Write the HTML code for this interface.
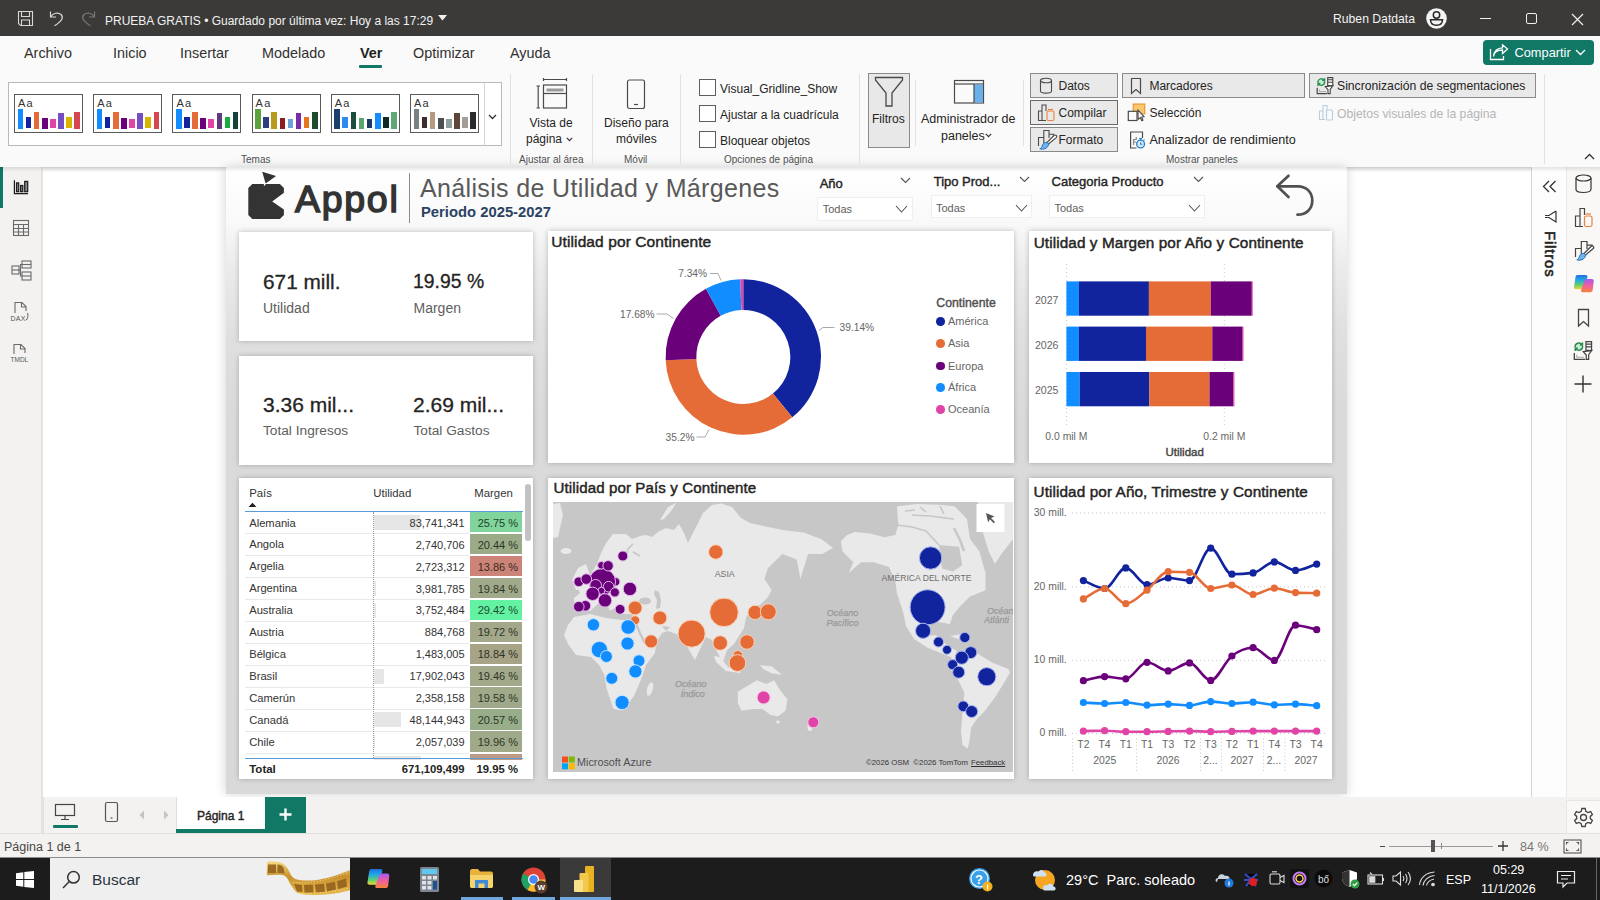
<!DOCTYPE html>
<html><head><meta charset="utf-8">
<style>
*{box-sizing:border-box;margin:0;padding:0}
html,body{width:1600px;height:900px;overflow:hidden;background:#fff;font-family:"Liberation Sans",sans-serif;color:#252423;position:relative}
.a{position:absolute}
.t{line-height:1;white-space:nowrap}
#title{left:0;top:0;width:1600px;height:36px;background:#3b3a39}
#tabs{left:0;top:36px;width:1600px;height:34px;background:#fafafa}
#ribbon{left:0;top:70px;width:1600px;height:97px;background:#fafafa;box-shadow:0 1.5px 4px rgba(0,0,0,.13)}
.tab{top:9.8px;font-size:14.4px;color:#323130;line-height:1;white-space:nowrap}
.lbl{font-size:10px;color:#505050}
.rb{font-size:12px;color:#252423}
.cb{width:17px;height:17px;border:1px solid #5e5e5e;background:#fff}
.tg{border:1px solid #8a8a8a;background:#e9e9e9}
#leftnav{left:0;top:167px;width:43px;height:666px;background:#f3f2f1;border-right:2px solid #e4e3e2}
#page{left:226px;top:167px;width:1121px;height:627px;background:linear-gradient(to bottom,#fff 0px,#f9f9f9 55px,#ebebeb 100px,#dfdfdf 170px,#dadada 250px,#d9d9d9 100%);box-shadow:-3px 0 10px rgba(0,0,0,.10),3px 0 10px rgba(0,0,0,.08)}
#filters{left:1531px;top:167px;width:35px;height:630px;background:#fdfdfd;border-left:1.5px solid #d4d4d4}
#rightbar{left:1566px;top:167px;width:34px;height:633px;background:#f9f8f7;border-left:1px solid #e9e9e9}
#pagetabs{left:43px;top:797px;width:1557px;height:36px;background:#f3f2f1}
#status{left:0;top:833px;width:1600px;height:24px;background:#f3f2f1;border-top:1px solid #e1e1e1}
#taskbar{left:0;top:857px;width:1600px;height:43px;background:#1c1c1c}
.card{position:absolute;background:#fff;box-shadow:0 0 5px rgba(0,0,0,.24)}
.sl{font-size:13px;color:#252423;-webkit-text-stroke:0.4px #252423}
.st{font-size:11px;color:#605e5c}
.chev path{fill:none;stroke:#555;stroke-width:1.1}
.slbox{border:1px solid #efefef;background:#fff}
.kv{font-size:20px;color:#252423;-webkit-text-stroke:0.3px #252423}
.ct{font-weight:normal;color:#252423;-webkit-text-stroke:0.45px #252423;letter-spacing:0.1px}
.sb{-webkit-text-stroke:0.4px currentColor}
.kl{font-size:14px;color:#605e5c}
</style></head>
<body>
<div id="ribbon" class="a"></div>
<div id="leftnav" class="a"></div>
<div id="page" class="a"></div>
<div id="filters" class="a"></div>
<div id="rightbar" class="a"></div>
<div id="pagetabs" class="a"></div>
<div id="status" class="a"></div>
<div id="taskbar" class="a"></div>
<!-- TITLE BAR -->
<div id="title" class="a">
  <svg class="a" style="left:17px;top:10px" width="17" height="17" viewBox="0 0 17 17" fill="none" stroke="#d8d8d8" stroke-width="1.1">
    <path d="M1.5 1.5 H15.5 V15.5 H3.5 L1.5 13.5 Z"/><path d="M4.5 1.5 V6.5 H12.5 V1.5"/><path d="M4.5 15.5 V10 H12.5 V15.5"/>
  </svg>
  <svg class="a" style="left:49px;top:10px" width="16" height="17" viewBox="0 0 16 17" fill="none" stroke="#d8d8d8" stroke-width="1.2">
    <path d="M1.5 1.5 V7 H7"/><path d="M1.8 6.8 C4 3 9 2 12 4.5 C15 7.5 13 11 5.5 15.8"/>
  </svg>
  <svg class="a" style="left:80px;top:10px" width="16" height="17" viewBox="0 0 16 17" fill="none" stroke="#7a7978" stroke-width="1.2">
    <path d="M14.5 1.5 V7 H9"/><path d="M14.2 6.8 C12 3 7 2 4 4.5 C1 7.5 3 11 10.5 15.8"/>
  </svg>
  <div class="a t" style="left:105px;top:15px;font-size:12px;color:#f2f2f2;white-space:nowrap">PRUEBA GRATIS • Guardado por última vez: Hoy a las 17:29</div>
  <svg class="a" style="left:438px;top:15px" width="10" height="6"><path d="M0 0 H9 L4.5 5.5Z" fill="#f0f0f0"/></svg>
  <div class="a t" style="left:1333px;top:12.5px;font-size:12.2px;color:#f2f2f2;white-space:nowrap">Ruben Datdata</div>
  <svg class="a" style="left:1425px;top:7px" width="23" height="23" viewBox="0 0 23 23">
    <circle cx="11.5" cy="11.5" r="10.3" fill="#f4f4f4"/>
    <circle cx="11.5" cy="8" r="3.2" fill="none" stroke="#2b2a29" stroke-width="1.5"/>
    <path d="M5.5 12.8 H17.5 C17.5 16.5 14.8 18.3 11.5 18.3 C8.2 18.3 5.5 16.5 5.5 12.8Z" fill="none" stroke="#2b2a29" stroke-width="1.5"/>
  </svg>
  <div class="a" style="left:1480px;top:18px;width:11px;height:1px;background:#f0f0f0"></div>
  <div class="a" style="left:1526px;top:13px;width:11px;height:11px;border:1.2px solid #f0f0f0;border-radius:2px"></div>
  <svg class="a" style="left:1571px;top:13px" width="13" height="13"><path d="M1 1 L12 12 M12 1 L1 12" stroke="#f0f0f0" stroke-width="1.2"/></svg>
</div>
<!-- TABS -->
<div id="tabs" class="a">
  <div class="a tab" style="left:24px">Archivo</div>
  <div class="a tab" style="left:113px">Inicio</div>
  <div class="a tab" style="left:180px">Insertar</div>
  <div class="a tab" style="left:262px">Modelado</div>
  <div class="a tab" style="left:360px;font-weight:bold;color:#201f1e">Ver</div>
  <div class="a" style="left:359px;top:29px;width:23px;height:3px;background:#117865;border-radius:1px"></div>
  <div class="a tab" style="left:413px">Optimizar</div>
  <div class="a tab" style="left:510px">Ayuda</div>
  <div class="a" style="left:1483px;top:4px;width:111px;height:25px;background:#117865;border-radius:4px"></div>
  <svg class="a" style="left:1489px;top:8px" width="20" height="17" viewBox="0 0 20 17" fill="none" stroke="#fff" stroke-width="1.3">
    <path d="M1.5 5 V15.5 H14.5 V12"/><path d="M4.5 12.5 C5 7.5 8.5 6 13.5 6 V9.5 L18.5 5 L13.5 0.8 V3.8 C8 4 5 7 4.5 12.5Z"/>
  </svg>
  <div class="a t" style="left:1514.5px;top:10.5px;font-size:12.8px;color:#fff">Compartir</div>
  <svg class="a" style="left:1575px;top:13px" width="11" height="7"><path d="M1 1 L5.5 5.5 L10 1" fill="none" stroke="#fff" stroke-width="1.3"/></svg>
</div>
<div class="a" style="left:8px;top:82px;width:494px;height:64px;border:1px solid #b9b9b9;background:#fff"></div>
<div class="a" style="left:484px;top:83px;width:1px;height:62px;background:#d6d6d6"></div>
<svg class="a" style="left:488px;top:114px" width="9" height="6"><path d="M1 1 L4.5 4.5 L8 1" fill="none" stroke="#333" stroke-width="1.3"/></svg>
<div class="a" style="left:14.0px;top:94px;width:69px;height:39px;border:1px solid #5a5a5a;background:#fff"><div class="a t" style="left:3px;top:2.5px;font-size:11px;color:#333;letter-spacing:1.2px">Aa</div><div class="a" style="left:2.6px;top:14.0px;width:5.6px;height:19.5px;background:#118DFF"></div><div class="a" style="left:10.7px;top:21.7px;width:5.6px;height:11.8px;background:#12239E"></div><div class="a" style="left:18.8px;top:17.0px;width:5.6px;height:16.5px;background:#E66C37"></div><div class="a" style="left:27.0px;top:22.5px;width:5.6px;height:11.0px;background:#6B007B"></div><div class="a" style="left:35.1px;top:23.7px;width:5.6px;height:9.8px;background:#E044A7"></div><div class="a" style="left:43.2px;top:18.0px;width:5.6px;height:15.5px;background:#744EC2"></div><div class="a" style="left:51.3px;top:21.7px;width:5.6px;height:11.8px;background:#D9B300"></div><div class="a" style="left:59.4px;top:17.0px;width:5.6px;height:16.5px;background:#D64550"></div></div>
<div class="a" style="left:93.2px;top:94px;width:69px;height:39px;border:1px solid #5a5a5a;background:#fff"><div class="a t" style="left:3px;top:2.5px;font-size:11px;color:#333;letter-spacing:1.2px">Aa</div><div class="a" style="left:2.6px;top:14.0px;width:5.6px;height:19.5px;background:#118DFF"></div><div class="a" style="left:10.7px;top:21.7px;width:5.6px;height:11.8px;background:#12239E"></div><div class="a" style="left:18.8px;top:17.0px;width:5.6px;height:16.5px;background:#E66C37"></div><div class="a" style="left:27.0px;top:22.5px;width:5.6px;height:11.0px;background:#6B007B"></div><div class="a" style="left:35.1px;top:23.7px;width:5.6px;height:9.8px;background:#E044A7"></div><div class="a" style="left:43.2px;top:18.0px;width:5.6px;height:15.5px;background:#744EC2"></div><div class="a" style="left:51.3px;top:21.7px;width:5.6px;height:11.8px;background:#D9B300"></div><div class="a" style="left:59.4px;top:17.0px;width:5.6px;height:16.5px;background:#D64550"></div></div>
<div class="a" style="left:172.4px;top:94px;width:69px;height:39px;border:1px solid #5a5a5a;background:#fff"><div class="a t" style="left:3px;top:2.5px;font-size:11px;color:#333;letter-spacing:1.2px">Aa</div><div class="a" style="left:2.6px;top:14.0px;width:5.6px;height:19.5px;background:#118DFF"></div><div class="a" style="left:10.7px;top:21.7px;width:5.6px;height:11.8px;background:#12239E"></div><div class="a" style="left:18.8px;top:17.0px;width:5.6px;height:16.5px;background:#E66C37"></div><div class="a" style="left:27.0px;top:22.5px;width:5.6px;height:11.0px;background:#6B007B"></div><div class="a" style="left:35.1px;top:23.7px;width:5.6px;height:9.8px;background:#E044A7"></div><div class="a" style="left:43.2px;top:18.0px;width:5.6px;height:15.5px;background:#5B3A7E"></div><div class="a" style="left:51.3px;top:21.7px;width:5.6px;height:11.8px;background:#1AAB40"></div><div class="a" style="left:59.4px;top:17.0px;width:5.6px;height:16.5px;background:#15433A"></div></div>
<div class="a" style="left:251.6px;top:94px;width:69px;height:39px;border:1px solid #5a5a5a;background:#fff"><div class="a t" style="left:3px;top:2.5px;font-size:11px;color:#333;letter-spacing:1.2px">Aa</div><div class="a" style="left:2.6px;top:14.0px;width:5.6px;height:19.5px;background:#5BA33B"></div><div class="a" style="left:10.7px;top:21.7px;width:5.6px;height:11.8px;background:#2F3D7C"></div><div class="a" style="left:18.8px;top:17.0px;width:5.6px;height:16.5px;background:#B89B1E"></div><div class="a" style="left:27.0px;top:22.5px;width:5.6px;height:11.0px;background:#8B1D24"></div><div class="a" style="left:35.1px;top:23.7px;width:5.6px;height:9.8px;background:#6CA2D8"></div><div class="a" style="left:43.2px;top:18.0px;width:5.6px;height:15.5px;background:#7B2BA6"></div><div class="a" style="left:51.3px;top:21.7px;width:5.6px;height:11.8px;background:#E8761F"></div><div class="a" style="left:59.4px;top:17.0px;width:5.6px;height:16.5px;background:#1E4B2B"></div></div>
<div class="a" style="left:330.8px;top:94px;width:69px;height:39px;border:1px solid #5a5a5a;background:#fff"><div class="a t" style="left:3px;top:2.5px;font-size:11px;color:#333;letter-spacing:1.2px">Aa</div><div class="a" style="left:2.6px;top:14.0px;width:5.6px;height:19.5px;background:#1A3F6E"></div><div class="a" style="left:10.7px;top:21.7px;width:5.6px;height:11.8px;background:#2E8AF0"></div><div class="a" style="left:18.8px;top:17.0px;width:5.6px;height:16.5px;background:#1D4D3E"></div><div class="a" style="left:27.0px;top:22.5px;width:5.6px;height:11.0px;background:#5AA66F"></div><div class="a" style="left:35.1px;top:23.7px;width:5.6px;height:9.8px;background:#1B3A66"></div><div class="a" style="left:43.2px;top:18.0px;width:5.6px;height:15.5px;background:#118DFF"></div><div class="a" style="left:51.3px;top:21.7px;width:5.6px;height:11.8px;background:#0F2A23"></div><div class="a" style="left:59.4px;top:17.0px;width:5.6px;height:16.5px;background:#5FA878"></div></div>
<div class="a" style="left:410.0px;top:94px;width:69px;height:39px;border:1px solid #5a5a5a;background:#fff"><div class="a t" style="left:3px;top:2.5px;font-size:11px;color:#333;letter-spacing:1.2px">Aa</div><div class="a" style="left:2.6px;top:14.0px;width:5.6px;height:19.5px;background:#7A807F"></div><div class="a" style="left:10.7px;top:21.7px;width:5.6px;height:11.8px;background:#3E2E2B"></div><div class="a" style="left:18.8px;top:17.0px;width:5.6px;height:16.5px;background:#B49A81"></div><div class="a" style="left:27.0px;top:22.5px;width:5.6px;height:11.0px;background:#4A5050"></div><div class="a" style="left:35.1px;top:23.7px;width:5.6px;height:9.8px;background:#8FA09D"></div><div class="a" style="left:43.2px;top:18.0px;width:5.6px;height:15.5px;background:#5E453B"></div><div class="a" style="left:51.3px;top:21.7px;width:5.6px;height:11.8px;background:#A49D95"></div><div class="a" style="left:59.4px;top:17.0px;width:5.6px;height:16.5px;background:#2A2C2C"></div></div>
<!-- group labels -->
<div class="a t lbl" style="left:241px;top:155px">Temas</div>
<div class="a" style="left:510px;top:74px;width:1px;height:90px;background:#e1e1e1"></div>
<div class="a" style="left:592px;top:74px;width:1px;height:90px;background:#e1e1e1"></div>
<div class="a" style="left:680px;top:74px;width:1px;height:90px;background:#e1e1e1"></div>
<div class="a" style="left:859px;top:74px;width:1px;height:90px;background:#e1e1e1"></div>
<div class="a" style="left:1544px;top:74px;width:1px;height:90px;background:#e1e1e1"></div>
<!-- Vista de pagina -->
<svg class="a" style="left:535px;top:78px" width="34" height="32" viewBox="0 0 34 32" fill="none" stroke="#4a4a4a" stroke-width="1.2">
  <path d="M8.5 1.5 H31.5 M8.5 0 V3 M31.5 0 V3"/>
  <path d="M1.5 8 H5 M1.5 30 H5 M3.2 8 V30"/>
  <rect x="8.5" y="7" width="23" height="23"/>
  <rect x="11.5" y="10.5" width="17" height="3" fill="#9a9a9a" stroke="none"/>
  <path d="M8.5 15.5 H31.5"/>
</svg>
<div class="a t rb" style="left:528px;top:116.5px;width:46px;text-align:center">Vista de</div>
<div class="a t rb" style="left:526px;top:133.3px">página</div>
<svg class="a" style="left:566px;top:137px" width="7" height="5"><path d="M0.8 0.8 L3.5 3.6 L6.2 0.8" fill="none" stroke="#333" stroke-width="1.2"/></svg>
<div class="a t lbl" style="left:519px;top:155px">Ajustar al área</div>
<!-- Movil -->
<svg class="a" style="left:626px;top:79px" width="20" height="31" viewBox="0 0 20 31" fill="none" stroke="#4a4a4a" stroke-width="1.2">
  <rect x="1.5" y="1" width="17" height="28.5" rx="2"/><path d="M8 25.5 H12"/>
</svg>
<div class="a t rb" style="left:604px;top:116.5px">Diseño para</div>
<div class="a t rb" style="left:616px;top:133.3px">móviles</div>
<div class="a t lbl" style="left:624px;top:155px">Móvil</div>
<!-- checkboxes -->
<div class="a cb" style="left:699px;top:79px"></div>
<div class="a cb" style="left:699px;top:105px"></div>
<div class="a cb" style="left:699px;top:131px"></div>
<div class="a t rb" style="left:720px;top:82.5px">Visual_Gridline_Show</div>
<div class="a t rb" style="left:720px;top:108.6px">Ajustar a la cuadrícula</div>
<div class="a t rb" style="left:720px;top:134.5px">Bloquear objetos</div>
<div class="a t lbl" style="left:724px;top:155px">Opciones de página</div>
<!-- Filtros -->
<div class="a" style="left:868px;top:73px;width:42px;height:75px;background:#e8e8e8;border:1px solid #8a8a8a"></div>
<svg class="a" style="left:874px;top:76px" width="30" height="32" viewBox="0 0 30 32" fill="none" stroke="#4a4a4a" stroke-width="1.3">
  <path d="M1.5 1.5 H28.5 V4 L18 17 V30 H12 V17 L1.5 4 Z"/>
</svg>
<div class="a t rb" style="left:872px;top:113.3px">Filtros</div>
<div class="a" style="left:915px;top:80px;width:1px;height:66px;background:#e1e1e1"></div>
<!-- Administrador -->
<svg class="a" style="left:953px;top:79px" width="32" height="26" viewBox="0 0 32 26" fill="none" stroke="#4a4a4a" stroke-width="1.2">
  <rect x="1.5" y="1.5" width="29" height="22.5"/><path d="M1.5 5 H30.5"/>
  <rect x="21" y="5.6" width="9" height="18" fill="#6cb0ea" stroke="none"/><path d="M21 5 V24"/>
</svg>
<div class="a t rb" style="left:921px;top:112.8px;font-size:12.5px">Administrador de</div>
<div class="a t rb" style="left:941px;top:129.6px;font-size:12.5px">paneles</div>
<svg class="a" style="left:985px;top:133px" width="7" height="5"><path d="M0.8 0.8 L3.5 3.6 L6.2 0.8" fill="none" stroke="#333" stroke-width="1.2"/></svg>
<div class="a" style="left:1023px;top:80px;width:1px;height:66px;background:#e1e1e1"></div>
<!-- toggles -->
<div class="a tg" style="left:1030px;top:73px;width:88px;height:25px"></div>
<div class="a tg" style="left:1030px;top:100px;width:88px;height:25px;border-color:#6a6a6a"></div>
<div class="a tg" style="left:1030px;top:127px;width:88px;height:25px"></div>
<div class="a tg" style="left:1122px;top:73px;width:183px;height:25px"></div>
<div class="a tg" style="left:1309px;top:73px;width:227px;height:25px"></div>
<svg class="a" style="left:1039px;top:77px" width="14" height="18" viewBox="0 0 14 18" fill="none" stroke="#4a4a4a" stroke-width="1.1">
  <ellipse cx="7" cy="3.5" rx="5.5" ry="2.3"/><path d="M1.5 3.5 V14 C1.5 16.8 12.5 16.8 12.5 14 V3.5"/>
</svg>
<div class="a t rb" style="left:1058.5px;top:80.1px">Datos</div>
<svg class="a" style="left:1037px;top:103px" width="20" height="19" viewBox="0 0 20 19" fill="none" stroke="#4a4a4a" stroke-width="1.1">
  <path d="M1.5 17.5 V8 H5 V17.5 M5 17.5 V2 H9 V8 M1 17.5 H9"/>
  <rect x="10" y="8" width="7" height="9.5" rx="1.5" stroke="#e8833f"/><path d="M11 6.5 H16" stroke="#e8833f"/>
</svg>
<div class="a t rb" style="left:1058.5px;top:107.1px">Compilar</div>
<svg class="a" style="left:1037px;top:129px" width="21" height="21" viewBox="0 0 21 21" fill="none" stroke="#4a4a4a" stroke-width="1.1">
  <path d="M1.5 17 V8.5 H6.8 V17 M6.8 10 V1.5 H12 V9 M12 5.2 H16.5 V6.5"/>
  <path d="M19.3 6.5 C20 7.2 19.8 8 19 8.8 L11.5 15 L10 13.5 L17 6.5 C17.8 5.8 18.6 5.8 19.3 6.5Z" fill="#fafafa"/>
  <path d="M10 13.3 C7.5 13 5.5 15 5 17.5 C4.8 18.5 3.8 19.5 2.8 19.8 C6 20.8 10.5 20 11.8 15.2Z" fill="#6fb3ef" stroke="#2f6fb8" stroke-width="1"/>
</svg>
<div class="a t rb" style="left:1058.5px;top:134.4px">Formato</div>
<svg class="a" style="left:1130px;top:77px" width="12" height="18" viewBox="0 0 12 18" fill="none" stroke="#4a4a4a" stroke-width="1.2">
  <path d="M1.5 1.5 H10.5 V16.5 L6 12.5 L1.5 16.5 Z"/>
</svg>
<div class="a t rb" style="left:1149.4px;top:80.1px">Marcadores</div>
<svg class="a" style="left:1127px;top:103px" width="19" height="19" viewBox="0 0 19 19">
  <rect x="6.2" y="1" width="11.6" height="9.9" fill="#f9c86a" stroke="#e48a2c" stroke-width="1"/>
  <rect x="1.3" y="8.3" width="8.7" height="9.2" fill="#fafafa" stroke="#4a4a4a" stroke-width="1.2"/>
  <path d="M10.9 6.8 L17.2 13.8 L14.6 14 L16 17.2 L14.8 17.8 L13.3 14.6 L11.2 16.4 Z" fill="#fafafa" stroke="#4a4a4a" stroke-width="1.1" stroke-linejoin="round"/>
</svg>
<div class="a t rb" style="left:1149.4px;top:107.1px">Selección</div>
<svg class="a" style="left:1129px;top:129px" width="17" height="21" viewBox="0 0 17 21" fill="none" stroke="#4a4a4a" stroke-width="1.2">
  <path d="M13.5 9 V3 H1.6 V19 H7.5"/><path d="M4.6 16 V10.5 H7.2 V8 M4.6 13 H7" stroke="#888"/>
  <circle cx="11.6" cy="15" r="3.9" stroke="#2f7fc8" stroke-width="1.4" fill="#d8ecfb"/><path d="M10.2 9.6 H13 M11.6 9.6 V11 M11.6 13.3 V15.2 H13.2 M14.6 11.3 L15.5 10.4" stroke="#2f7fc8" stroke-width="1.1"/>
</svg>
<div class="a t rb" style="left:1149.4px;top:134.4px;font-size:12.6px">Analizador de rendimiento</div>
<svg class="a" style="left:1316px;top:77px" width="19" height="18" viewBox="0 0 19 18"><path d="M11.7 0.6 H16.8 V8.5 H11.7 Z M11.7 2.8 H16.8 M11.7 5.2 H16.8" stroke="#444" stroke-width="1.1" fill="#fafafa"/>
  <circle cx="5.3" cy="5" r="3.6" fill="#c9f0d6"/>
  <path d="M1.9 5.6 A3.5 3.5 0 0 1 8.2 3.2 M8.6 1.2 V3.6 H6.2 M8.7 4.5 A3.5 3.5 0 0 1 2.4 6.9 M2 8.9 V6.5 H4.4" stroke="#2b8a50" stroke-width="1.3" fill="none"/>
  <path d="M9.3 9.6 L16.9 8.6 L14.2 12.4 V16.6 H12 V12.6 Z" stroke="#444" stroke-width="1.1" fill="#fafafa"/>
  <path d="M1.2 10.8 V16.6 H11" stroke="#444" stroke-width="1.2" fill="none"/><path d="M3.4 12.5 V14.6 H10" stroke="#aaa" stroke-width="1" fill="none"/></svg>
<div class="a t rb" style="left:1337px;top:80.4px;font-size:12.2px">Sincronización de segmentaciones</div>
<svg class="a" style="left:1318px;top:104px" width="16" height="17" viewBox="0 0 16 17" fill="none" stroke="#b8cde0" stroke-width="1.1">
  <path d="M1.5 15.5 V7 H5 V15.5 M5 15.5 V1.5 H9 V6 M1 15.5 H7"/><rect x="8.5" y="6" width="6" height="10" rx="1"/>
</svg>
<div class="a t rb" style="left:1337px;top:108.2px;color:#b5b5b5;font-size:12.2px">Objetos visuales de la página</div>
<div class="a t lbl" style="left:1166px;top:155px">Mostrar paneles</div>
<svg class="a" style="left:1584px;top:153px" width="11" height="7"><path d="M1 6 L5.5 1.5 L10 6" fill="none" stroke="#333" stroke-width="1.3"/></svg>
<!-- REPORT HEADER -->
<svg class="a" style="left:246px;top:169px" width="40" height="52" viewBox="0 0 40 52">
  <path d="M16.2 2.7 L30.1 7.1 L19.6 14.6 Z" fill="#333"/>
  <path d="M6.3 14.9 H33.9 L37.9 18.9 V23.8 L26.2 32.4 L37.9 40.4 V45.9 L33.9 49.9 H6.3 L2.3 45.9 V18.9 Z" fill="#333"/>
  <path d="M19.2 14.2 L18.3 16.5" stroke="#fff" stroke-width="1.4"/>
</svg>
<div class="a t" style="left:295px;top:181px;font-size:37.5px;color:#333;-webkit-text-stroke:1.5px #333;letter-spacing:1.7px">Appol</div>
<div class="a" style="left:408.5px;top:173px;width:1.5px;height:50px;background:#8c8c8c"></div>
<div class="a t" style="left:420px;top:176px;font-size:25px;color:#595959;letter-spacing:0.35px">Análisis de Utilidad y Márgenes</div>
<div class="a t" style="left:421px;top:204.9px;font-size:14.8px;font-weight:bold;color:#2a4363">Periodo 2025-2027</div>
<!-- slicers -->
<div class="a t sl" style="left:819.7px;top:176.5px">Año</div>
<svg class="a chev" style="left:900px;top:177px" width="11" height="7"><path d="M1 1 L5.5 5.5 L10 1"/></svg>
<div class="a slbox" style="left:817px;top:196.5px;width:96px;height:24px"></div>
<div class="a t st" style="left:822.7px;top:204.4px">Todas</div>
<svg class="a chev" style="left:895px;top:205px" width="13" height="9"><path d="M1 1 L6.5 7 L12 1"/></svg>

<div class="a t sl" style="left:933.7px;top:174.6px">Tipo Prod...</div>
<svg class="a chev" style="left:1019px;top:176px" width="11" height="7"><path d="M1 1 L5.5 5.5 L10 1"/></svg>
<div class="a slbox" style="left:930.7px;top:194.7px;width:101px;height:23px"></div>
<div class="a t st" style="left:936px;top:203.4px">Todas</div>
<svg class="a chev" style="left:1014.5px;top:203.5px" width="13" height="9"><path d="M1 1 L6.5 7 L12 1"/></svg>

<div class="a t sl" style="left:1051.6px;top:174.6px">Categoria Producto</div>
<svg class="a chev" style="left:1192.5px;top:175.5px" width="11" height="7"><path d="M1 1 L5.5 5.5 L10 1"/></svg>
<div class="a slbox" style="left:1049.2px;top:195.3px;width:156px;height:23px"></div>
<div class="a t st" style="left:1054.4px;top:203.4px">Todas</div>
<svg class="a chev" style="left:1187.5px;top:203.5px" width="13" height="9"><path d="M1 1 L6.5 7 L12 1"/></svg>
<!-- back arrow -->
<svg class="a" style="left:1274px;top:173px" width="42" height="45" viewBox="0 0 42 45" fill="none" stroke="#505050" stroke-width="2.7" stroke-linecap="round" stroke-linejoin="round">
  <path d="M14.5 2.8 L3.3 13.3 L14.5 24"/><path d="M3.5 13.3 H24 C32.5 13.3 38.3 19.5 38.3 27.5 C38.3 35.8 32.5 41.7 23.5 41.7"/>
</svg>
<!-- KPI cards -->
<div class="card" style="left:239px;top:232px;width:294px;height:109px"></div>
<div class="a t kv" style="left:263px;top:272px;font-size:20.8px">671 mill.</div>
<div class="a t kl" style="left:263px;top:301px">Utilidad</div>
<div class="a t kv" style="left:413px;top:272px;font-size:19.4px">19.95 %</div>
<div class="a t kl" style="left:413.5px;top:301px">Margen</div>
<div class="card" style="left:239px;top:356px;width:294px;height:109px"></div>
<div class="a t kv" style="left:263px;top:393.6px;font-size:21px">3.36 mil...</div>
<div class="a t kl" style="left:263px;top:423.6px;font-size:13.7px">Total Ingresos</div>
<div class="a t kv" style="left:413px;top:393.6px;font-size:21px">2.69 mil...</div>
<div class="a t kl" style="left:413.5px;top:423.6px;font-size:13.7px">Total Gastos</div>
<div class="card" style="left:548px;top:231px;width:466px;height:232px"></div>
<div class="card" style="left:1029px;top:231px;width:303px;height:232px"></div>
<div class="card" style="left:239px;top:478px;width:294px;height:301px"></div>
<div class="card" style="left:548px;top:478px;width:466px;height:301px"></div>
<div class="card" style="left:1029px;top:478px;width:303px;height:301px"></div>
<div class="a t ct" style="left:551.3px;top:234.1px;font-size:15.5px">Utilidad por Continente</div>
<div class="a t ct" style="left:1033.7px;top:234.8px;font-size:15.3px">Utilidad y Margen por Año y Continente</div>
<div class="a t ct" style="left:553.5px;top:480.4px;font-size:15.1px">Utilidad por País y Continente</div>
<div class="a t ct" style="left:1033.5px;top:484.4px;font-size:15.3px">Utilidad por Año, Trimestre y Continente</div>
<svg class="a" style="left:548px;top:231px" width="466" height="232" viewBox="548 231 466 232"><path d="M743.30 279.30 A77.7 77.7 0 0 1 792.30 417.30 L772.94 393.48 A47.0 47.0 0 0 0 743.30 310.00 Z" fill="#12239E"/><path d="M792.30 417.30 A77.7 77.7 0 0 1 665.67 360.22 L696.34 358.95 A47.0 47.0 0 0 0 772.94 393.48 Z" fill="#E66C37"/><path d="M665.67 360.22 A77.7 77.7 0 0 1 705.95 288.86 L720.71 315.79 A47.0 47.0 0 0 0 696.34 358.95 Z" fill="#6B007B"/><path d="M705.95 288.86 A77.7 77.7 0 0 1 740.18 279.36 L741.41 310.04 A47.0 47.0 0 0 0 720.71 315.79 Z" fill="#118DFF"/><path d="M740.18 279.36 A77.7 77.7 0 0 1 743.30 279.30 L743.30 310.00 A47.0 47.0 0 0 0 741.41 310.04 Z" fill="#E044A7"/><g fill="none" stroke="#a0a0a0" stroke-width="0.9"><path d="M819 330.5 L823 327.5 H834.5"/><path d="M696.5 437 H705 L709 429.5"/><path d="M656.5 314 H667 L673.5 318.5"/><path d="M710 273.5 H718 L721 280.5"/></g></svg>
<div class="a t" style="top:323.4px;font-size:10.2px;color:#666;left:839.6px;">39.14%</div>
<div class="a t" style="top:433.4px;font-size:10.2px;color:#666;left:665.6px;">35.2%</div>
<div class="a t" style="top:309.8px;font-size:10.2px;color:#666;left:620.0px;">17.68%</div>
<div class="a t" style="top:269.0px;font-size:10.2px;color:#666;left:678.2px;">7.34%</div>
<div class="a t" style="top:297.1px;font-size:12.3px;color:#505050;left:936.3px;-webkit-text-stroke:0.4px #505050">Continente</div>
<div class="a" style="left:936.4px;top:317.2px;width:8.6px;height:8.6px;border-radius:50%;background:#12239E"></div>
<div class="a t" style="top:316.1px;font-size:11px;color:#666;left:948.0px;">América</div>
<div class="a" style="left:936.4px;top:339.0px;width:8.6px;height:8.6px;border-radius:50%;background:#E66C37"></div>
<div class="a t" style="top:337.9px;font-size:11px;color:#666;left:948.0px;">Asia</div>
<div class="a" style="left:936.4px;top:361.6px;width:8.6px;height:8.6px;border-radius:50%;background:#6B007B"></div>
<div class="a t" style="top:360.5px;font-size:11px;color:#666;left:948.0px;">Europa</div>
<div class="a" style="left:936.4px;top:383.3px;width:8.6px;height:8.6px;border-radius:50%;background:#118DFF"></div>
<div class="a t" style="top:382.2px;font-size:11px;color:#666;left:948.0px;">África</div>
<div class="a" style="left:936.4px;top:405.1px;width:8.6px;height:8.6px;border-radius:50%;background:#E044A7"></div>
<div class="a t" style="top:404.0px;font-size:11px;color:#666;left:948.0px;">Oceanía</div>
<svg class="a" style="left:1029px;top:231px" width="303" height="232" viewBox="1029 231 303 232"><path d="M1066.5 264 V428 M1224.3 264 V428" stroke="#c8c8c8" stroke-width="1" stroke-dasharray="1 3"/><rect x="1066.4" y="281.4" width="12.5" height="34.3" fill="#118DFF"/><rect x="1078.9" y="281.4" width="70.0" height="34.3" fill="#12239E"/><rect x="1148.9" y="281.4" width="61.9" height="34.3" fill="#E66C37"/><rect x="1210.8" y="281.4" width="41.0" height="34.3" fill="#6B007B"/><rect x="1251.8" y="281.4" width="0.9" height="34.3" fill="#E044A7"/><rect x="1066.4" y="326.6" width="12.5" height="34.3" fill="#118DFF"/><rect x="1078.9" y="326.6" width="67.1" height="34.3" fill="#12239E"/><rect x="1146.0" y="326.6" width="66.3" height="34.3" fill="#E66C37"/><rect x="1212.3" y="326.6" width="30.3" height="34.3" fill="#6B007B"/><rect x="1242.6" y="326.6" width="0.9" height="34.3" fill="#E044A7"/><rect x="1066.4" y="372" width="13.3" height="34.3" fill="#118DFF"/><rect x="1079.7" y="372" width="69.7" height="34.3" fill="#12239E"/><rect x="1149.4" y="372" width="60.1" height="34.3" fill="#E66C37"/><rect x="1209.5" y="372" width="24.0" height="34.3" fill="#6B007B"/><rect x="1233.5" y="372" width="0.9" height="34.3" fill="#E044A7"/></svg>
<div class="a t" style="top:294.8px;font-size:10.6px;color:#666;right:541.5px;">2027</div>
<div class="a t" style="top:339.7px;font-size:10.6px;color:#666;right:541.5px;">2026</div>
<div class="a t" style="top:384.6px;font-size:10.6px;color:#666;right:541.5px;">2025</div>
<div class="a t" style="top:431.7px;font-size:10.4px;color:#666;left:966.4px;width:200px;text-align:center;">0.0 mil M</div>
<div class="a t" style="top:431.7px;font-size:10.4px;color:#666;left:1124.3px;width:200px;text-align:center;">0.2 mil M</div>
<div class="a t" style="top:446.6px;font-size:11.5px;color:#444;left:1084.7px;width:200px;text-align:center;-webkit-text-stroke:0.4px #444">Utilidad</div>
<div class="a t" style="top:487.5px;font-size:11.4px;color:#333;left:249.2px;">País</div>
<div class="a t" style="top:487.5px;font-size:11.4px;color:#333;left:373.3px;">Utilidad</div>
<div class="a t" style="top:487.5px;font-size:11.4px;color:#333;left:474.2px;">Margen</div>
<svg class="a" style="left:248px;top:502px" width="10" height="6"><path d="M0.5 5 L4.5 0.8 L8.5 5Z" fill="#222"/></svg>
<div class="a" style="left:469.5px;top:512.0px;width:52.8px;height:20.4px;background:#80d49c"></div>
<div class="a" style="left:373.5px;top:515.0px;width:46.5px;height:15px;background:#e6e6e6"></div>
<div class="a" style="left:245px;top:533.4px;width:224px;height:1px;background:#e9e9e9"></div>
<div class="a t" style="top:517.5px;font-size:11.2px;color:#333;left:249.2px;">Alemania</div>
<div class="a t" style="top:517.7px;font-size:11px;color:#333;right:1135.4px;">83,741,341</div>
<div class="a t" style="top:517.7px;font-size:11px;color:#23432b;right:1082.0px;">25.75 %</div>
<div class="a" style="left:469.5px;top:533.9px;width:52.8px;height:20.4px;background:#9bab88"></div>
<div class="a" style="left:373.5px;top:536.9px;width:1.5px;height:15px;background:#e6e6e6"></div>
<div class="a" style="left:245px;top:555.4px;width:224px;height:1px;background:#e9e9e9"></div>
<div class="a t" style="top:539.4px;font-size:11.2px;color:#333;left:249.2px;">Angola</div>
<div class="a t" style="top:539.6px;font-size:11px;color:#333;right:1135.4px;">2,740,706</div>
<div class="a t" style="top:539.6px;font-size:11px;color:#2b3626;right:1082.0px;">20.44 %</div>
<div class="a" style="left:469.5px;top:555.9px;width:52.8px;height:20.4px;background:#cc8478"></div>
<div class="a" style="left:373.5px;top:558.9px;width:1.5px;height:15px;background:#e6e6e6"></div>
<div class="a" style="left:245px;top:577.3px;width:224px;height:1px;background:#e9e9e9"></div>
<div class="a t" style="top:561.4px;font-size:11.2px;color:#333;left:249.2px;">Argelia</div>
<div class="a t" style="top:561.5px;font-size:11px;color:#333;right:1135.4px;">2,723,312</div>
<div class="a t" style="top:561.5px;font-size:11px;color:#392a21;right:1082.0px;">13.86 %</div>
<div class="a" style="left:469.5px;top:577.8px;width:52.8px;height:20.4px;background:#a1a98b"></div>
<div class="a" style="left:373.5px;top:580.8px;width:2.2px;height:15px;background:#e6e6e6"></div>
<div class="a" style="left:245px;top:599.2px;width:224px;height:1px;background:#e9e9e9"></div>
<div class="a t" style="top:583.3px;font-size:11.2px;color:#333;left:249.2px;">Argentina</div>
<div class="a t" style="top:583.5px;font-size:11px;color:#333;right:1135.4px;">3,981,785</div>
<div class="a t" style="top:583.5px;font-size:11px;color:#2d3626;right:1082.0px;">19.84 %</div>
<div class="a" style="left:469.5px;top:599.7px;width:52.8px;height:20.4px;background:#63f1a2"></div>
<div class="a" style="left:373.5px;top:602.7px;width:2.1px;height:15px;background:#e6e6e6"></div>
<div class="a" style="left:245px;top:621.1px;width:224px;height:1px;background:#e9e9e9"></div>
<div class="a t" style="top:605.2px;font-size:11.2px;color:#333;left:249.2px;">Australia</div>
<div class="a t" style="top:605.4px;font-size:11px;color:#333;right:1135.4px;">3,752,484</div>
<div class="a t" style="top:605.4px;font-size:11px;color:#1b4d2d;right:1082.0px;">29.42 %</div>
<div class="a" style="left:469.5px;top:621.7px;width:52.8px;height:20.4px;background:#a3a88a"></div>
<div class="a" style="left:373.5px;top:624.7px;width:0.5px;height:15px;background:#e6e6e6"></div>
<div class="a" style="left:245px;top:643.1px;width:224px;height:1px;background:#e9e9e9"></div>
<div class="a t" style="top:627.2px;font-size:11.2px;color:#333;left:249.2px;">Austria</div>
<div class="a t" style="top:627.3px;font-size:11px;color:#333;right:1135.4px;">884,768</div>
<div class="a t" style="top:627.3px;font-size:11px;color:#2d3526;right:1082.0px;">19.72 %</div>
<div class="a" style="left:469.5px;top:643.6px;width:52.8px;height:20.4px;background:#a7a387"></div>
<div class="a" style="left:373.5px;top:646.6px;width:0.8px;height:15px;background:#e6e6e6"></div>
<div class="a" style="left:245px;top:665.0px;width:224px;height:1px;background:#e9e9e9"></div>
<div class="a t" style="top:649.1px;font-size:11.2px;color:#333;left:249.2px;">Bélgica</div>
<div class="a t" style="top:649.3px;font-size:11px;color:#333;right:1135.4px;">1,483,005</div>
<div class="a t" style="top:649.3px;font-size:11px;color:#2e3425;right:1082.0px;">18.84 %</div>
<div class="a" style="left:469.5px;top:665.5px;width:52.8px;height:20.4px;background:#a2a88a"></div>
<div class="a" style="left:373.5px;top:668.5px;width:10px;height:15px;background:#e6e6e6"></div>
<div class="a" style="left:245px;top:686.9px;width:224px;height:1px;background:#e9e9e9"></div>
<div class="a t" style="top:671.0px;font-size:11.2px;color:#333;left:249.2px;">Brasil</div>
<div class="a t" style="top:671.2px;font-size:11px;color:#333;right:1135.4px;">17,902,043</div>
<div class="a t" style="top:671.2px;font-size:11px;color:#2d3526;right:1082.0px;">19.46 %</div>
<div class="a" style="left:469.5px;top:687.4px;width:52.8px;height:20.4px;background:#a0a98a"></div>
<div class="a" style="left:373.5px;top:690.4px;width:1.3px;height:15px;background:#e6e6e6"></div>
<div class="a" style="left:245px;top:708.9px;width:224px;height:1px;background:#e9e9e9"></div>
<div class="a t" style="top:693.0px;font-size:11.2px;color:#333;left:249.2px;">Camerún</div>
<div class="a t" style="top:693.1px;font-size:11px;color:#333;right:1135.4px;">2,358,158</div>
<div class="a t" style="top:693.1px;font-size:11px;color:#2c3626;right:1082.0px;">19.58 %</div>
<div class="a" style="left:469.5px;top:709.4px;width:52.8px;height:20.4px;background:#98ad89"></div>
<div class="a" style="left:373.5px;top:712.4px;width:27px;height:15px;background:#e6e6e6"></div>
<div class="a" style="left:245px;top:730.8px;width:224px;height:1px;background:#e9e9e9"></div>
<div class="a t" style="top:714.9px;font-size:11.2px;color:#333;left:249.2px;">Canadá</div>
<div class="a t" style="top:715.1px;font-size:11px;color:#333;right:1135.4px;">48,144,943</div>
<div class="a t" style="top:715.1px;font-size:11px;color:#2a3726;right:1082.0px;">20.57 %</div>
<div class="a" style="left:469.5px;top:731.3px;width:52.8px;height:20.4px;background:#a0aa8a"></div>
<div class="a" style="left:373.5px;top:734.3px;width:1.1px;height:15px;background:#e6e6e6"></div>
<div class="a" style="left:245px;top:752.7px;width:224px;height:1px;background:#e9e9e9"></div>
<div class="a t" style="top:736.8px;font-size:11.2px;color:#333;left:249.2px;">Chile</div>
<div class="a t" style="top:737.0px;font-size:11px;color:#333;right:1135.4px;">2,057,039</div>
<div class="a t" style="top:737.0px;font-size:11px;color:#2c3626;right:1082.0px;">19.96 %</div>
<div class="a" style="left:469.5px;top:754.0px;width:52.5px;height:6px;background:#bc9a85"></div>
<div class="a" style="left:373.5px;top:756.0px;width:47.5px;height:4px;background:#e6e6e6"></div>
<div class="a" style="left:255px;top:752px;width:270px;height:6px;background:transparent"></div>
<div class="a" style="left:372.5px;top:512px;width:0;height:246px;border-left:1px dotted #9a9a9a"></div>
<div class="a" style="left:245px;top:510.8px;width:277.5px;height:1.3px;background:#5b9bd5"></div>
<div class="a" style="left:245px;top:757.5px;width:277.5px;height:1.3px;background:#5b9bd5"></div>
<div class="a t" style="top:764.3px;font-size:11.5px;color:#252423;font-weight:bold;left:249.2px;">Total</div>
<div class="a t" style="top:764.4px;font-size:11.3px;color:#252423;font-weight:bold;right:1135.4px;">671,109,499</div>
<div class="a t" style="top:764.4px;font-size:11.3px;color:#252423;font-weight:bold;right:1082.0px;">19.95 %</div>
<div class="a" style="left:524.5px;top:483.5px;width:6px;height:57.5px;background:#c2c2c2;border-radius:3px"></div>
<svg class="a" style="left:553px;top:502px" width="460" height="270" viewBox="553 502 460 270"><rect x="553" y="502" width="460" height="270" fill="#c7c7c7"/><g fill="#e9e9e9"><path d="M575 611 L574 598 L580 593 L578 588 L588 580 L592 572 L597 564 L601 553 L606 543 L613 534 L626 534 L632 539 L640 536 L646 535 L652 537 L658 532 L666 528 L674 530 L679 524 L684 533 L688 543 L692 535 L696 527 L703 513 L712 505 L721 503.6 L732 507 L741 518 L750 523 L768 527 L786 530.6 L804 532.4 L822 539.6 L833 548 L822 554 L808 554 L800.4 579 L796.8 559.4 L782.4 554 L768 568 L764.4 579 L771.6 590 L768 597 L760 605 L752 606 L746 618 L744 628 L739 636 L734 644 L727 650 L723 662 L716 650 L712 640 L706 637 L701 647 L695 660 L689 650 L684 638 L676 634 L668 631 L662 633 L657 641 L647 645 L641 633 L636 621 L632 614 L622 614 L618 606 L610 611 L606 601 L598 604 L590 611Z"/><path d="M564 635 L568 625 L574 617 L590 614 L606 618 L622 620 L636 620 L641 633 L648 645 L656 645 L655 653 L646 665 L642 677 L640 682 L634 696 L623 710.5 L613.5 709 L607 690 L604 674 L599 665 L591 657 L576 655 L568 644Z"/><path d="M578 568 L586 564 L591 578 L590 588 L576 590 L572 580Z"/><path d="M737.8 691.7 L747.3 686 L756.9 680.3 L766.4 684.1 L774.1 680.3 L779.8 689.8 L787.5 699.4 L785.5 710.8 L777.9 716.6 L770.3 714.7 L762.6 708.9 L753.1 708.9 L741.6 710.8 L737.8 703.2Z"/><path d="M840.9 541.2 L847.1 535 L854.9 531.9 L870.4 533.4 L884.4 537.3 L895.3 535 L898.4 524.9 L896.9 506.2 L917.1 503.9 L938.9 504.7 L954.4 506.2 L966.9 518.7 L970 538.9 L979.3 551.3 L985.5 573.1 L985.5 590.2 L970 596.4 L960.7 605.8 L952.9 615.1 L949.8 624.4 L945.1 622.9 L931.1 621.3 L923.3 624.4 L921 633 L928 636 L936 635 L942 641 L950 647 L957 651 L953 658 L941 653 L928 648 L914 639 L906 626 L903.1 612 L896.9 593.3 L895.3 580.9 L889.1 566.9 L873.6 562.2 L861.1 562.2 L848.7 573.1 L853.3 562.2 L842.4 551.3Z"/><path d="M977.8 501 L1013 501 L1013 538.9 L1001.1 554.4 L994.9 563.8 L988.7 551.3 L982.4 531.1Z"/><path d="M964.3 650.4 L977.9 653.8 L991.4 662.2 L1008.3 669 L1010 672.4 L1003.2 684.2 L994.7 697.7 L984.6 711.2 L976.2 719.7 L971.1 728.1 L969.4 741.6 L967.7 748.4 L962.6 745 L961 731.5 L962.6 711.2 L964.3 692.6 L957.6 679.1 L949.1 667.3 L950.8 658.9 L957.6 652.1Z"/><path d="M760 665 L772 666.5 L782 675 L771 673 L763 669Z"/><path d="M714 656 L720 657 L728 667 L741 670 L740 673 L726 671 L716 662Z"/><ellipse cx="566" cy="551" rx="5.5" ry="3"/><ellipse cx="650" cy="689" rx="2.8" ry="7" transform="rotate(15 650 689)"/><path d="M553 504 L560 503 L563 515 L558 537 L553 538Z"/><path d="M660 520 L668 507 L676 503 L672 510 L664 519Z"/><path d="M950 636 L962 634 L969 640 L958 639Z"/><ellipse cx="810" cy="727" rx="2.5" ry="4"/><ellipse cx="778" cy="722" rx="2" ry="1.5"/></g><g fill="#c7c7c7"><path d="M938.9 545.1 L959.1 546.7 L962.2 565.3 L952.9 571.6 L942 568.4Z"/><ellipse cx="645" cy="601" rx="6" ry="3.5"/><path d="M655 590 L659 592 L661 600 L660 608 L656 609 L657 600 L654 594Z"/><path d="M636 620 L641 633 L646 642 L644 644 L639 634 L634 622Z"/><path d="M662 626 L670 627 L666 631Z"/></g><g fill="none" stroke="#c7c7c7" stroke-width="1.6"><path d="M897 525 L912 527 L926 531 L939 545"/><path d="M912 515 L930 516 L954 519"/><path d="M954 528 L960 540 L964 551" stroke-width="2.5"/><path d="M920 507 L926 512 M940 506 L944 514 M905 511 L915 510"/><path d="M625 560 L628 549 L633 544 M633 552 L640 556"/></g><circle cx="615.7" cy="581.8" r="4.2" fill="#6B007B" stroke="#e2b8ec" stroke-width="1"/><circle cx="602.3" cy="581.8" r="13.3" fill="#6B007B" stroke="#e2b8ec" stroke-width="1"/><circle cx="578.8" cy="581.8" r="4.9" fill="#6B007B" stroke="#e2b8ec" stroke-width="1"/><circle cx="586.3" cy="579.1" r="5.3" fill="#6B007B" stroke="#e2b8ec" stroke-width="1"/><circle cx="595.7" cy="585.3" r="5.8" fill="#6B007B" stroke="#e2b8ec" stroke-width="1"/><circle cx="608.6" cy="586.7" r="5.3" fill="#6B007B" stroke="#e2b8ec" stroke-width="1"/><circle cx="601.4" cy="590.7" r="3.5" fill="#6B007B" stroke="#e2b8ec" stroke-width="1"/><circle cx="614.8" cy="592.4" r="4.6" fill="#6B007B" stroke="#e2b8ec" stroke-width="1"/><circle cx="592.6" cy="593.8" r="6.7" fill="#6B007B" stroke="#e2b8ec" stroke-width="1"/><circle cx="605" cy="600.4" r="6.7" fill="#6B007B" stroke="#e2b8ec" stroke-width="1"/><circle cx="629.9" cy="588.9" r="6.7" fill="#6B007B" stroke="#e2b8ec" stroke-width="1"/><circle cx="585.4" cy="605.8" r="5.3" fill="#6B007B" stroke="#e2b8ec" stroke-width="1"/><circle cx="578.8" cy="606.7" r="5.3" fill="#6B007B" stroke="#e2b8ec" stroke-width="1"/><circle cx="620.1" cy="609.3" r="4.9" fill="#6B007B" stroke="#e2b8ec" stroke-width="1"/><circle cx="601.4" cy="565.3" r="3.8" fill="#6B007B" stroke="#e2b8ec" stroke-width="1"/><circle cx="608.1" cy="565.8" r="5.2" fill="#6B007B" stroke="#e2b8ec" stroke-width="1"/><circle cx="622.8" cy="556" r="5" fill="#6B007B" stroke="#e2b8ec" stroke-width="1"/><circle cx="724" cy="612.4" r="14.3" fill="#E66C37" stroke="#fad3b8" stroke-width="1"/><circle cx="691.6" cy="633.6" r="13.6" fill="#E66C37" stroke="#fad3b8" stroke-width="1"/><circle cx="715.8" cy="552" r="7.2" fill="#E66C37" stroke="#fad3b8" stroke-width="1"/><circle cx="635.1" cy="607.9" r="7" fill="#E66C37" stroke="#fad3b8" stroke-width="1"/><circle cx="635.1" cy="620.3" r="4.5" fill="#E66C37" stroke="#fad3b8" stroke-width="1"/><circle cx="659.9" cy="617.9" r="7" fill="#E66C37" stroke="#fad3b8" stroke-width="1"/><circle cx="651.1" cy="641.4" r="6.6" fill="#E66C37" stroke="#fad3b8" stroke-width="1"/><circle cx="755" cy="612.4" r="7.1" fill="#E66C37" stroke="#fad3b8" stroke-width="1"/><circle cx="768.3" cy="611.8" r="8" fill="#E66C37" stroke="#fad3b8" stroke-width="1"/><circle cx="720.2" cy="643" r="7.3" fill="#E66C37" stroke="#fad3b8" stroke-width="1"/><circle cx="747" cy="642" r="7.3" fill="#E66C37" stroke="#fad3b8" stroke-width="1"/><circle cx="737.8" cy="655.4" r="4.8" fill="#E66C37" stroke="#fad3b8" stroke-width="1"/><circle cx="737.4" cy="663" r="8.4" fill="#E66C37" stroke="#fad3b8" stroke-width="1"/><circle cx="593.4" cy="624.8" r="6.2" fill="#118DFF" stroke="#c4e4ff" stroke-width="1"/><circle cx="628.2" cy="627" r="7.3" fill="#118DFF" stroke="#c4e4ff" stroke-width="1"/><circle cx="627.5" cy="643.5" r="6.6" fill="#118DFF" stroke="#c4e4ff" stroke-width="1"/><circle cx="599.4" cy="649.6" r="8.2" fill="#118DFF" stroke="#c4e4ff" stroke-width="1"/><circle cx="606.4" cy="656.5" r="6" fill="#118DFF" stroke="#c4e4ff" stroke-width="1"/><circle cx="639" cy="660.8" r="6" fill="#118DFF" stroke="#c4e4ff" stroke-width="1"/><circle cx="635.4" cy="671.4" r="6.6" fill="#118DFF" stroke="#c4e4ff" stroke-width="1"/><circle cx="611.8" cy="678.3" r="6" fill="#118DFF" stroke="#c4e4ff" stroke-width="1"/><circle cx="622.1" cy="702.5" r="7.1" fill="#118DFF" stroke="#c4e4ff" stroke-width="1"/><circle cx="927.6" cy="607.3" r="17.5" fill="#12239E" stroke="#aab6f0" stroke-width="1"/><circle cx="930.6" cy="558" r="11.2" fill="#12239E" stroke="#aab6f0" stroke-width="1"/><circle cx="923.1" cy="630.8" r="7.6" fill="#12239E" stroke="#aab6f0" stroke-width="1"/><circle cx="938.5" cy="642" r="5.1" fill="#12239E" stroke="#aab6f0" stroke-width="1"/><circle cx="947" cy="649.8" r="4.5" fill="#12239E" stroke="#aab6f0" stroke-width="1"/><circle cx="964.8" cy="637.5" r="5.1" fill="#12239E" stroke="#aab6f0" stroke-width="1"/><circle cx="970.8" cy="652.6" r="6" fill="#12239E" stroke="#aab6f0" stroke-width="1"/><circle cx="961.8" cy="657.7" r="6.6" fill="#12239E" stroke="#aab6f0" stroke-width="1"/><circle cx="952.7" cy="664.7" r="5.1" fill="#12239E" stroke="#aab6f0" stroke-width="1"/><circle cx="958.7" cy="672.2" r="6" fill="#12239E" stroke="#aab6f0" stroke-width="1"/><circle cx="986.8" cy="676.7" r="9.1" fill="#12239E" stroke="#aab6f0" stroke-width="1"/><circle cx="963.3" cy="706.3" r="5.4" fill="#12239E" stroke="#aab6f0" stroke-width="1"/><circle cx="971.7" cy="711.5" r="6" fill="#12239E" stroke="#aab6f0" stroke-width="1"/><circle cx="763.6" cy="697.5" r="6.5" fill="#E044A7" stroke="#f7c6e6" stroke-width="1"/><circle cx="813.3" cy="722.3" r="5.5" fill="#E044A7" stroke="#f7c6e6" stroke-width="1"/><rect x="976.5" y="504" width="28" height="28" fill="#fff"/><path d="M986 513 L994.5 516.5 L991 518 L995 522 L993.8 523.2 L989.8 519.2 L988.2 522.5Z" fill="#555"/><rect x="562" y="756.5" width="6" height="6" fill="#f25022"/><rect x="568.8" y="756.5" width="6" height="6" fill="#7fba00"/><rect x="562" y="763.3" width="6" height="6" fill="#00a4ef"/><rect x="568.8" y="763.3" width="6" height="6" fill="#ffb900"/></svg>
<div class="a t" style="top:757.4px;font-size:10.8px;color:#505050;left:577.0px;">Microsoft Azure</div>
<div class="a t" style="top:759.4px;font-size:7.8px;color:#333;left:866.0px;">©2026 OSM&nbsp; ©2026 TomTom&nbsp;</div>
<div class="a t" style="top:759.4px;font-size:7.8px;color:#333;left:971.0px;text-decoration:underline">Feedback</div>
<div class="a t" style="top:570.3px;font-size:8.8px;color:#707070;left:624.7px;width:200px;text-align:center;">ASIA</div>
<div class="a t" style="top:574.4px;font-size:8.6px;color:#6e6e6e;left:826.5px;width:200px;text-align:center;">AMÉRICA DEL NORTE</div>
<div class="a t" style="top:679.9px;font-size:9px;color:#999;left:590.7px;width:200px;text-align:center;font-style:italic;-webkit-text-stroke:0.25px #999">Océano</div>
<div class="a t" style="top:690.4px;font-size:9px;color:#999;left:592.7px;width:200px;text-align:center;font-style:italic;-webkit-text-stroke:0.25px #999">Índico</div>
<div class="a t" style="top:608.9px;font-size:9px;color:#999;left:742.4px;width:200px;text-align:center;font-style:italic;-webkit-text-stroke:0.25px #999">Océano</div>
<div class="a t" style="top:618.6px;font-size:9px;color:#999;left:742.6px;width:200px;text-align:center;font-style:italic;-webkit-text-stroke:0.25px #999">Pacífico</div>
<div class="a" style="left:984px;top:605px;width:29px;height:26px;overflow:hidden">
<div class="a t" style="left:3px;top:2.2px;font-size:9px;color:#999;font-style:italic;-webkit-text-stroke:0.25px #999">Océan</div><div class="a t" style="left:0px;top:11.3px;font-size:9px;color:#999;font-style:italic;-webkit-text-stroke:0.25px #999">Atlánti</div></div>
<svg class="a" style="left:1029px;top:478px" width="303" height="301" viewBox="1029 478 303 301"><path d="M1072 513 H1326" stroke="#c6c6c6" stroke-width="1" stroke-dasharray="1 3"/><path d="M1072 586.9 H1326" stroke="#c6c6c6" stroke-width="1" stroke-dasharray="1 3"/><path d="M1072 660.4 H1326" stroke="#c6c6c6" stroke-width="1" stroke-dasharray="1 3"/><path d="M1072 733.5 H1326" stroke="#c6c6c6" stroke-width="1" stroke-dasharray="1 3"/><path d="M1072.6 738.5 V771" stroke="#c6c6c6" stroke-width="1" stroke-dasharray="1 2.5"/><path d="M1136.6 738.5 V771" stroke="#c6c6c6" stroke-width="1" stroke-dasharray="1 2.5"/><path d="M1200.6 738.5 V771" stroke="#c6c6c6" stroke-width="1" stroke-dasharray="1 2.5"/><path d="M1221.6 738.5 V771" stroke="#c6c6c6" stroke-width="1" stroke-dasharray="1 2.5"/><path d="M1263.6 738.5 V771" stroke="#c6c6c6" stroke-width="1" stroke-dasharray="1 2.5"/><path d="M1284.9 738.5 V771" stroke="#c6c6c6" stroke-width="1" stroke-dasharray="1 2.5"/><path d="M1083.4 580.6 C1090.5 583.2 1097.5 588.5 1104.6 588.5 C1111.7 588.5 1118.8 567.9 1125.8 567.9 C1132.9 567.9 1140.0 584.7 1147.0 584.7 C1154.1 584.7 1161.2 578.0 1168.2 578.0 C1175.3 578.0 1182.4 580.6 1189.5 580.6 C1196.5 580.6 1203.6 548.2 1210.7 548.2 C1217.7 548.2 1224.8 574.2 1231.9 574.2 C1238.9 574.2 1246.0 573.8 1253.1 572.9 C1260.2 572.1 1267.2 561.9 1274.3 561.9 C1281.4 561.9 1288.4 570.4 1295.5 570.4 C1302.6 570.4 1309.6 566.2 1316.7 564.1" fill="none" stroke="#12239E" stroke-width="2.6" stroke-linejoin="round"/><circle cx="1083.4" cy="580.6" r="3.6" fill="#12239E"/><circle cx="1104.6" cy="588.5" r="3.6" fill="#12239E"/><circle cx="1125.8" cy="567.9" r="3.6" fill="#12239E"/><circle cx="1147.0" cy="584.7" r="3.6" fill="#12239E"/><circle cx="1168.2" cy="578.0" r="3.6" fill="#12239E"/><circle cx="1189.5" cy="580.6" r="3.6" fill="#12239E"/><circle cx="1210.7" cy="548.2" r="3.6" fill="#12239E"/><circle cx="1231.9" cy="574.2" r="3.6" fill="#12239E"/><circle cx="1253.1" cy="572.9" r="3.6" fill="#12239E"/><circle cx="1274.3" cy="561.9" r="3.6" fill="#12239E"/><circle cx="1295.5" cy="570.4" r="3.6" fill="#12239E"/><circle cx="1316.7" cy="564.1" r="3.6" fill="#12239E"/><path d="M1083.4 598.9 C1090.5 595.4 1097.5 588.5 1104.6 588.5 C1111.7 588.5 1118.8 603.7 1125.8 603.7 C1132.9 603.7 1140.0 595.4 1147.0 590.1 C1154.1 584.7 1161.2 571.7 1168.2 571.7 C1175.3 571.7 1182.4 571.9 1189.5 572.3 C1196.5 572.7 1203.6 588.5 1210.7 588.5 C1217.7 588.5 1224.8 585.0 1231.9 585.0 C1238.9 585.0 1246.0 594.5 1253.1 594.5 C1260.2 594.5 1267.2 588.2 1274.3 588.2 C1281.4 588.2 1288.4 592.2 1295.5 592.6 C1302.6 593.0 1309.6 593.0 1316.7 593.2" fill="none" stroke="#E66C37" stroke-width="2.6" stroke-linejoin="round"/><circle cx="1083.4" cy="598.9" r="3.6" fill="#E66C37"/><circle cx="1104.6" cy="588.5" r="3.6" fill="#E66C37"/><circle cx="1125.8" cy="603.7" r="3.6" fill="#E66C37"/><circle cx="1147.0" cy="590.1" r="3.6" fill="#E66C37"/><circle cx="1168.2" cy="571.7" r="3.6" fill="#E66C37"/><circle cx="1189.5" cy="572.3" r="3.6" fill="#E66C37"/><circle cx="1210.7" cy="588.5" r="3.6" fill="#E66C37"/><circle cx="1231.9" cy="585.0" r="3.6" fill="#E66C37"/><circle cx="1253.1" cy="594.5" r="3.6" fill="#E66C37"/><circle cx="1274.3" cy="588.2" r="3.6" fill="#E66C37"/><circle cx="1295.5" cy="592.6" r="3.6" fill="#E66C37"/><circle cx="1316.7" cy="593.2" r="3.6" fill="#E66C37"/><path d="M1083.4 680.7 C1090.5 679.3 1097.5 676.6 1104.6 676.6 C1111.7 676.6 1118.8 678.8 1125.8 678.8 C1132.9 678.8 1140.0 662.3 1147.0 662.3 C1154.1 662.3 1161.2 670.9 1168.2 670.9 C1175.3 670.9 1182.4 662.9 1189.5 662.9 C1196.5 662.9 1203.6 680.4 1210.7 680.4 C1217.7 680.4 1224.8 661.4 1231.9 656.0 C1238.9 650.5 1246.0 647.7 1253.1 647.7 C1260.2 647.7 1267.2 660.4 1274.3 660.4 C1281.4 660.4 1288.4 625.2 1295.5 625.2 C1302.6 625.2 1309.6 628.2 1316.7 629.7" fill="none" stroke="#6B007B" stroke-width="2.6" stroke-linejoin="round"/><circle cx="1083.4" cy="680.7" r="3.6" fill="#6B007B"/><circle cx="1104.6" cy="676.6" r="3.6" fill="#6B007B"/><circle cx="1125.8" cy="678.8" r="3.6" fill="#6B007B"/><circle cx="1147.0" cy="662.3" r="3.6" fill="#6B007B"/><circle cx="1168.2" cy="670.9" r="3.6" fill="#6B007B"/><circle cx="1189.5" cy="662.9" r="3.6" fill="#6B007B"/><circle cx="1210.7" cy="680.4" r="3.6" fill="#6B007B"/><circle cx="1231.9" cy="656.0" r="3.6" fill="#6B007B"/><circle cx="1253.1" cy="647.7" r="3.6" fill="#6B007B"/><circle cx="1274.3" cy="660.4" r="3.6" fill="#6B007B"/><circle cx="1295.5" cy="625.2" r="3.6" fill="#6B007B"/><circle cx="1316.7" cy="629.7" r="3.6" fill="#6B007B"/><path d="M1083.4 702.5 C1090.5 702.9 1097.5 703.5 1104.6 703.5 C1111.7 703.5 1118.8 702.5 1125.8 702.5 C1132.9 702.5 1140.0 705.1 1147.0 705.1 C1154.1 705.1 1161.2 704.1 1168.2 704.1 C1175.3 704.1 1182.4 705.4 1189.5 705.4 C1196.5 705.4 1203.6 701.6 1210.7 701.6 C1217.7 701.6 1224.8 703.5 1231.9 703.5 C1238.9 703.5 1246.0 702.2 1253.1 702.2 C1260.2 702.2 1267.2 704.8 1274.3 704.8 C1281.4 704.8 1288.4 704.1 1295.5 704.1 C1302.6 704.1 1309.6 705.2 1316.7 705.7" fill="none" stroke="#118DFF" stroke-width="2.6" stroke-linejoin="round"/><circle cx="1083.4" cy="702.5" r="3.6" fill="#118DFF"/><circle cx="1104.6" cy="703.5" r="3.6" fill="#118DFF"/><circle cx="1125.8" cy="702.5" r="3.6" fill="#118DFF"/><circle cx="1147.0" cy="705.1" r="3.6" fill="#118DFF"/><circle cx="1168.2" cy="704.1" r="3.6" fill="#118DFF"/><circle cx="1189.5" cy="705.4" r="3.6" fill="#118DFF"/><circle cx="1210.7" cy="701.6" r="3.6" fill="#118DFF"/><circle cx="1231.9" cy="703.5" r="3.6" fill="#118DFF"/><circle cx="1253.1" cy="702.2" r="3.6" fill="#118DFF"/><circle cx="1274.3" cy="704.8" r="3.6" fill="#118DFF"/><circle cx="1295.5" cy="704.1" r="3.6" fill="#118DFF"/><circle cx="1316.7" cy="705.7" r="3.6" fill="#118DFF"/><path d="M1083.4 731.1 C1090.5 731.0 1097.5 730.7 1104.6 730.7 C1111.7 730.7 1118.8 731.7 1125.8 731.7 C1132.9 731.7 1140.0 731.7 1147.0 731.7 C1154.1 731.7 1161.2 731.5 1168.2 731.4 C1175.3 731.3 1182.4 731.1 1189.5 731.1 C1196.5 731.1 1203.6 731.7 1210.7 731.7 C1217.7 731.7 1224.8 731.5 1231.9 731.4 C1238.9 731.3 1246.0 731.1 1253.1 731.1 C1260.2 731.1 1267.2 731.1 1274.3 731.1 C1281.4 731.1 1288.4 731.1 1295.5 731.1 C1302.6 731.1 1309.6 731.1 1316.7 731.1" fill="none" stroke="#E044A7" stroke-width="2.6" stroke-linejoin="round"/><circle cx="1083.4" cy="731.1" r="3.6" fill="#E044A7"/><circle cx="1104.6" cy="730.7" r="3.6" fill="#E044A7"/><circle cx="1125.8" cy="731.7" r="3.6" fill="#E044A7"/><circle cx="1147.0" cy="731.7" r="3.6" fill="#E044A7"/><circle cx="1168.2" cy="731.4" r="3.6" fill="#E044A7"/><circle cx="1189.5" cy="731.1" r="3.6" fill="#E044A7"/><circle cx="1210.7" cy="731.7" r="3.6" fill="#E044A7"/><circle cx="1231.9" cy="731.4" r="3.6" fill="#E044A7"/><circle cx="1253.1" cy="731.1" r="3.6" fill="#E044A7"/><circle cx="1274.3" cy="731.1" r="3.6" fill="#E044A7"/><circle cx="1295.5" cy="731.1" r="3.6" fill="#E044A7"/><circle cx="1316.7" cy="731.1" r="3.6" fill="#E044A7"/></svg>
<div class="a t" style="top:507.9px;font-size:10.4px;color:#666;right:533.3px;">30 mill.</div>
<div class="a t" style="top:581.8px;font-size:10.4px;color:#666;right:533.3px;">20 mill.</div>
<div class="a t" style="top:655.3px;font-size:10.4px;color:#666;right:533.3px;">10 mill.</div>
<div class="a t" style="top:728.2px;font-size:10.4px;color:#666;right:533.3px;">0 mill.</div>
<div class="a t" style="top:740.2px;font-size:10.4px;color:#666;left:983.4px;width:200px;text-align:center;">T2</div>
<div class="a t" style="top:740.2px;font-size:10.4px;color:#666;left:1004.6px;width:200px;text-align:center;">T4</div>
<div class="a t" style="top:740.2px;font-size:10.4px;color:#666;left:1025.8px;width:200px;text-align:center;">T1</div>
<div class="a t" style="top:740.2px;font-size:10.4px;color:#666;left:1047.0px;width:200px;text-align:center;">T1</div>
<div class="a t" style="top:740.2px;font-size:10.4px;color:#666;left:1068.2px;width:200px;text-align:center;">T3</div>
<div class="a t" style="top:740.2px;font-size:10.4px;color:#666;left:1089.5px;width:200px;text-align:center;">T2</div>
<div class="a t" style="top:740.2px;font-size:10.4px;color:#666;left:1110.7px;width:200px;text-align:center;">T3</div>
<div class="a t" style="top:740.2px;font-size:10.4px;color:#666;left:1131.9px;width:200px;text-align:center;">T2</div>
<div class="a t" style="top:740.2px;font-size:10.4px;color:#666;left:1153.1px;width:200px;text-align:center;">T1</div>
<div class="a t" style="top:740.2px;font-size:10.4px;color:#666;left:1174.3px;width:200px;text-align:center;">T4</div>
<div class="a t" style="top:740.2px;font-size:10.4px;color:#666;left:1195.5px;width:200px;text-align:center;">T3</div>
<div class="a t" style="top:740.2px;font-size:10.4px;color:#666;left:1216.7px;width:200px;text-align:center;">T4</div>
<div class="a t" style="top:755.5px;font-size:10.4px;color:#666;left:1004.7px;width:200px;text-align:center;">2025</div>
<div class="a t" style="top:755.5px;font-size:10.4px;color:#666;left:1068.0px;width:200px;text-align:center;">2026</div>
<div class="a t" style="top:755.5px;font-size:10.4px;color:#666;left:1110.5px;width:200px;text-align:center;">2...</div>
<div class="a t" style="top:755.5px;font-size:10.4px;color:#666;left:1142.0px;width:200px;text-align:center;">2027</div>
<div class="a t" style="top:755.5px;font-size:10.4px;color:#666;left:1174.0px;width:200px;text-align:center;">2...</div>
<div class="a t" style="top:755.5px;font-size:10.4px;color:#666;left:1206.0px;width:200px;text-align:center;">2027</div>
<!-- LEFT NAV -->
<div class="a" style="left:0;top:167px;width:3px;height:41px;background:#117865"></div>
<svg class="a" style="left:12px;top:179px" width="18" height="17" viewBox="0 0 18 17" fill="none" stroke="#1b1b1b" stroke-width="1.2">
  <path d="M2.4 1.2 V14.7 H16"/><rect x="4.5" y="3.9" width="2.2" height="8.8" fill="#8a8a8a"/><rect x="8.6" y="6.5" width="2.2" height="6.2" fill="#8a8a8a"/><rect x="12.7" y="2.4" width="3" height="10.3" fill="#8a8a8a"/>
</svg>
<svg class="a" style="left:12px;top:219px" width="18" height="18" viewBox="0 0 18 18" fill="none" stroke="#6a6a6a" stroke-width="1.1">
  <rect x="1.5" y="1.5" width="15" height="15"/><path d="M1.5 5.5 H16.5 M1.5 9.5 H16.5 M1.5 13 H16.5 M6.5 5.5 V16.5 M11.5 5.5 V16.5"/>
</svg>
<svg class="a" style="left:11px;top:260px" width="21" height="21" viewBox="0 0 21 21" fill="none" stroke="#6a6a6a" stroke-width="1.1">
  <rect x="1" y="6" width="7" height="8"/><path d="M1 10 H8"/><rect x="11" y="1" width="9" height="7"/><path d="M11 4.5 H20"/><rect x="11" y="12" width="9" height="8"/><path d="M11 16 H20"/><path d="M8 10 H9.5 V4.5 H11 M9.5 10 V16 H11"/>
</svg>
<svg class="a" style="left:8px;top:301px" width="26" height="22" viewBox="0 0 26 22">
  <path d="M7 12 V1.5 H14 L18 5.5 V10 M13.5 1.5 V6 H18" fill="none" stroke="#6a6a6a" stroke-width="1.1"/>
  <path d="M19.5 12 C20.5 15 19.5 18 18 19" fill="none" stroke="#6a6a6a" stroke-width="1.1"/>
  <text x="2.5" y="19.5" font-family="Liberation Sans" font-size="7" fill="#555" letter-spacing="0.3">DAX</text>
</svg>
<svg class="a" style="left:9px;top:343px" width="26" height="22" viewBox="0 0 26 22">
  <path d="M5 11 V1.5 H12 L16 5.5 V10 M11.5 1.5 V6 H16" fill="none" stroke="#6a6a6a" stroke-width="1.1"/>
  <text x="1.5" y="19" font-family="Liberation Sans" font-size="6.5" fill="#555">TMDL</text>
</svg>
<!-- FILTER PANE -->
<svg class="a" style="left:1542px;top:180px" width="15" height="13" viewBox="0 0 15 13" fill="none" stroke="#333" stroke-width="1.3">
  <path d="M7 1 L1.5 6.5 L7 12 M13.5 1 L8 6.5 L13.5 12"/>
</svg>
<svg class="a" style="left:1544px;top:210px" width="13" height="13" viewBox="0 0 13 13" fill="none" stroke="#333" stroke-width="1.2">
  <path d="M12 1 V12 L5 7.5 L1 7.5 M12 1 L5 5.5 L1 5.5"/>
</svg>
<div class="a t sb" style="left:1558px;top:231px;font-size:15px;letter-spacing:0.8px;color:#252423;-webkit-text-stroke:0.6px #252423;transform-origin:0 0;transform:rotate(90deg)">Filtros</div>
<!-- RIGHT BAR -->
<svg class="a" style="left:1574px;top:174px" width="19" height="20" viewBox="0 0 19 20" fill="none" stroke="#333" stroke-width="1.2">
  <ellipse cx="9.5" cy="4" rx="7.5" ry="3"/><path d="M2 4 V15.5 C2 19.5 17 19.5 17 15.5 V4"/>
</svg>
<svg class="a" style="left:1574px;top:207px" width="20" height="21" viewBox="0 0 20 21" fill="none" stroke="#444" stroke-width="1.2">
  <path d="M1.5 19.5 V9 H6 V19.5 M6 19.5 V1.5 H10.5 V8 M1 19.5 H9"/><rect x="10.5" y="9" width="7.5" height="10.5" rx="1.8" stroke="#e8833f"/><path d="M11.5 7 H17" stroke="#e8833f"/>
</svg>
<svg class="a" style="left:1574px;top:240px" width="21" height="21" viewBox="0 0 21 21" fill="none" stroke="#444" stroke-width="1.2">
  <path d="M1.5 17 V8.5 H7.3 V17 M7.3 10 V1.5 H13 V9 M13 5.2 H18 V6.5"/>
  <path d="M19.3 6.5 C20 7.2 19.8 8 19 8.8 L11.5 15 L10 13.5 L17 6.5 C17.8 5.8 18.6 5.8 19.3 6.5Z" fill="#fff"/>
  <path d="M10 13.3 C7.5 13 5.5 15 5 17.5 C4.8 18.5 3.8 19.5 2.8 19.8 C6 20.8 10.5 20 11.8 15.2Z" fill="#6fb3ef" stroke="#2f6fb8" stroke-width="1"/>
</svg>
<svg class="a" style="left:1573px;top:274px" width="21" height="19" viewBox="0 0 21 19"><defs><linearGradient id="cp1" x1="0" y1="0" x2="0" y2="1"><stop offset="0" stop-color="#1f6fe0"/><stop offset=".35" stop-color="#22a8e8"/><stop offset=".7" stop-color="#5fd16a"/><stop offset="1" stop-color="#f5d43a"/></linearGradient>
  <linearGradient id="cp2" x1="0" y1="0" x2="0" y2="1"><stop offset="0" stop-color="#a55cf0"/><stop offset=".5" stop-color="#ef5ea0"/><stop offset="1" stop-color="#f7833a"/></linearGradient></defs><path d="M4.5 1 H12.5 C14.2 1 14.8 2.2 14.3 3.6 L10.8 13.5 C10.4 14.6 9.5 15.2 8.3 15.2 H3 C1.4 15.2 0.6 14.2 1 12.7 L2.5 3.2 C2.8 1.8 3.4 1 4.5 1Z" fill="url(#cp1)"/>
  <path d="M9.5 18.2 H17.2 C18.7 18.2 19.4 17.3 19.7 16 L20.7 7.3 C20.9 5.8 20.2 5 18.8 5 H13.8 C12.7 5 12 5.5 11.6 6.6 L8.2 16 C7.8 17.3 8.3 18.2 9.5 18.2Z" fill="url(#cp2)"/></svg>
<svg class="a" style="left:1577px;top:308px" width="13" height="20" viewBox="0 0 13 20" fill="none" stroke="#444" stroke-width="1.3">
  <path d="M1.5 1.5 H11.5 V18 L6.5 13.5 L1.5 18 Z"/>
</svg>
<svg class="a" style="left:1573px;top:341px" width="21" height="20" viewBox="0 0 19 18"><path d="M11.7 0.6 H16.8 V8.5 H11.7 Z M11.7 2.8 H16.8 M11.7 5.2 H16.8" stroke="#444" stroke-width="1.1" fill="#fafafa"/>
  <circle cx="5.3" cy="5" r="3.6" fill="#c9f0d6"/>
  <path d="M1.9 5.6 A3.5 3.5 0 0 1 8.2 3.2 M8.6 1.2 V3.6 H6.2 M8.7 4.5 A3.5 3.5 0 0 1 2.4 6.9 M2 8.9 V6.5 H4.4" stroke="#2b8a50" stroke-width="1.3" fill="none"/>
  <path d="M9.3 9.6 L16.9 8.6 L14.2 12.4 V16.6 H12 V12.6 Z" stroke="#444" stroke-width="1.1" fill="#fafafa"/>
  <path d="M1.2 10.8 V16.6 H11" stroke="#444" stroke-width="1.2" fill="none"/><path d="M3.4 12.5 V14.6 H10" stroke="#aaa" stroke-width="1" fill="none"/></svg>
<svg class="a" style="left:1574px;top:375px" width="18" height="18"><path d="M9 0.5 V17.5 M0.5 9 H17.5" stroke="#333" stroke-width="1.4"/></svg>

<!-- PAGE TABS -->
<div class="a" style="left:43px;top:797px;width:1px;height:36px;background:#e0e0e0"></div>
<svg class="a" style="left:54px;top:803px" width="22" height="18" viewBox="0 0 22 18" fill="none" stroke="#444" stroke-width="1.2">
  <rect x="1.5" y="1.5" width="19" height="11"/><path d="M11 12.5 V16 M7 16.5 H15"/>
</svg>
<div class="a" style="left:53px;top:825px;width:25px;height:2.5px;background:#117865;border-radius:1px"></div>
<svg class="a" style="left:104px;top:801px" width="15" height="22" viewBox="0 0 15 22" fill="none" stroke="#555" stroke-width="1.2">
  <rect x="1.5" y="1.5" width="12" height="19" rx="1.5"/><path d="M6.5 17 H8.5"/>
</svg>
<svg class="a" style="left:139px;top:810px" width="6" height="10"><path d="M5 0.5 L0.5 5 L5 9.5Z" fill="#c4c4c4"/></svg>
<svg class="a" style="left:163px;top:810px" width="6" height="10"><path d="M1 0.5 L5.5 5 L1 9.5Z" fill="#c4c4c4"/></svg>
<div class="a" style="left:175.5px;top:797px;width:89px;height:36px;background:#fff;border-left:1px solid #dedede"></div>
<div class="a" style="left:175.5px;top:829px;width:89px;height:4px;background:#117865"></div>
<div class="a t sb" style="left:197px;top:809.5px;font-size:12px;color:#252423">Página 1</div>
<div class="a" style="left:265px;top:797px;width:41px;height:36px;background:#117865"></div>
<svg class="a" style="left:279px;top:808px" width="13" height="13"><path d="M6.5 0.5 V12.5 M0.5 6.5 H12.5" stroke="#fff" stroke-width="2.4"/></svg>
<div class="a" style="left:1566px;top:797px;width:34px;height:36px;background:#f9f8f7;border-left:1px solid #e6e6e6;border-top:1px solid #e6e6e6;top:799.5px;height:33.5px"></div>
<!-- STATUS -->
<div class="a t" style="left:4px;top:840.5px;font-size:12.5px;color:#484644">Página 1 de 1</div>
<div class="a" style="left:1380px;top:846px;width:5px;height:1.2px;background:#444"></div>
<div class="a" style="left:1389px;top:846px;width:104px;height:1px;background:#9a9a9a"></div>
<div class="a" style="left:1431px;top:840px;width:4px;height:12px;background:#555"></div>
<div class="a" style="left:1441px;top:843px;width:1px;height:6px;background:#888"></div>
<svg class="a" style="left:1497px;top:840px" width="12" height="12"><path d="M6 1 V11 M1 6 H11" stroke="#333" stroke-width="1.3"/></svg>
<div class="a t" style="left:1520px;top:840.5px;font-size:12.5px;color:#777">84 %</div>
<svg class="a" style="left:1563px;top:839px" width="19" height="15" viewBox="0 0 19 15" fill="none" stroke="#555" stroke-width="1.1">
  <rect x="1" y="1" width="17" height="13"/><path d="M3.5 5.5 V3.5 H5.5 M13.5 3.5 H15.5 V5.5 M15.5 9.5 V11.5 H13.5 M5.5 11.5 H3.5 V9.5"/>
</svg>
<!-- TASKBAR -->
<div class="a" style="left:0;top:857px;width:1600px;height:1px;background:#8a8a8a"></div>
<svg class="a" style="left:16px;top:871px" width="18" height="17" viewBox="0 0 18 17" fill="#fff">
  <path d="M0 2.3 L7.3 1.3 V8 H0Z M8.3 1.1 L18 0 V8 H8.3Z M0 9 H7.3 V15.7 L0 14.7Z M8.3 9 H18 V17 L8.3 15.9Z"/>
</svg>
<div class="a" style="left:50px;top:858px;width:300px;height:42px;background:#efefef"></div>
<svg class="a" style="left:62px;top:870px" width="19" height="19" viewBox="0 0 19 19" fill="none" stroke="#333" stroke-width="1.5">
  <circle cx="11.5" cy="7.3" r="5.8"/><path d="M7.3 11.5 L1 18"/>
</svg>
<div class="a t" style="left:92px;top:872px;font-size:15.5px;color:#2a3440">Buscar</div>
<svg class="a" style="left:266px;top:861px" width="84" height="36" viewBox="0 0 84 36">
  <defs><linearGradient id="gold" x1="0" y1="0" x2="0" y2="1"><stop offset="0" stop-color="#f6d77a"/><stop offset=".45" stop-color="#c8912e"/><stop offset="1" stop-color="#e9b94a"/></linearGradient></defs>
  <path d="M0.9 1 C8 0 14 0.5 17 2.8 C21 5.5 23 10 25 14 C27.5 18.5 32 19.8 45.8 19.4 C60 18.5 72 14 84 9 V29.2 C75 31.5 68 33 63 33.2 C55 34 48 34.2 42.9 33.8 C36 33.4 31.5 32.5 29.6 30.4 C26.5 27 25.5 25 23.9 22.3 C22 18.5 20.5 15.5 18.7 14.8 C16 13.5 13.5 13.6 11.3 13.7 L0.9 14.3Z" fill="url(#gold)"/>
  <g fill="#8f5e1c" opacity=".85"><path d="M2 3.5 H10 V12 H2Z"/><path d="M11.5 3.5 C14 3.6 16 4.5 17.5 6.5 L18.5 12.5 C16 12 14 12 11.5 12Z"/>
  <path d="M28 23 L36 24 L36.5 31 L31 30.5Z"/><path d="M38 24 L47 23.8 L47.5 31.5 L38.5 31.5Z"/><path d="M49 23.5 L58 22.8 L59 30.8 L50 31.5Z"/><path d="M60 22.5 L69 20.8 L70 28.5 L61 30.5Z"/><path d="M71 20.2 L80 17.5 L81 25.5 L72 28.2Z"/></g>
  <path d="M2 2 H16 M27 21.5 C40 22.5 60 21 82 11 M30 32.5 C45 33 62 31.5 82 27.5" stroke="#fbe8a6" stroke-width="0.9" stroke-dasharray="1 2" fill="none"/>
</svg>
<!-- pinned apps -->
<svg class="a" style="left:366px;top:868px" width="24" height="21" viewBox="0 0 21 19"><path d="M4.5 1 H12.5 C14.2 1 14.8 2.2 14.3 3.6 L10.8 13.5 C10.4 14.6 9.5 15.2 8.3 15.2 H3 C1.4 15.2 0.6 14.2 1 12.7 L2.5 3.2 C2.8 1.8 3.4 1 4.5 1Z" fill="url(#cp1)"/>
  <path d="M9.5 18.2 H17.2 C18.7 18.2 19.4 17.3 19.7 16 L20.7 7.3 C20.9 5.8 20.2 5 18.8 5 H13.8 C12.7 5 12 5.5 11.6 6.6 L8.2 16 C7.8 17.3 8.3 18.2 9.5 18.2Z" fill="url(#cp2)"/></svg>
<svg class="a" style="left:420px;top:867px" width="19" height="25" viewBox="0 0 19 25">
  <rect x="0" y="0" width="19" height="25" rx="1.5" fill="#7d8590"/><rect x="2" y="2" width="15" height="5" fill="#5ec8f0"/>
  <g fill="#dfe3e8"><rect x="2" y="9" width="4" height="3.5"/><rect x="7.5" y="9" width="4" height="3.5"/><rect x="2" y="14" width="4" height="3.5"/><rect x="7.5" y="14" width="4" height="3.5"/><rect x="2" y="19" width="4" height="3.5"/><rect x="7.5" y="19" width="4" height="3.5"/><rect x="13" y="9" width="4" height="3.5"/></g>
  <rect x="13" y="14" width="4" height="8.5" fill="#1d4f91"/>
</svg>
<svg class="a" style="left:470px;top:869px" width="23" height="19" viewBox="0 0 23 19">
  <path d="M0 2 C0 1 1 0 2 0 H8 L10 2.5 H21 C22 2.5 23 3.5 23 4.5 V17 C23 18 22 19 21 19 H2 C1 19 0 18 0 17Z" fill="#e8b33a"/>
  <path d="M0 6 H23 V17 C23 18 22 19 21 19 H2 C1 19 0 18 0 17Z" fill="#f7d36b"/>
  <path d="M5 19 V11 H18 V19 H14.5 V14.5 H8.5 V19Z" fill="#3f8ad8"/>
</svg>
<div class="a" style="left:461px;top:897px;width:42px;height:3px;background:#6fa8dc"></div>
<svg class="a" style="left:521px;top:867px" width="27" height="27" viewBox="0 0 27 27">
  <circle cx="12.5" cy="12.5" r="12" fill="#dd4437"/>
  <path d="M12.5 12.5 L2.1 6.5 A12 12 0 0 0 6.5 22.9Z" fill="#1ea363"/>
  <path d="M12.5 12.5 L6.5 22.9 A12 12 0 0 0 24.5 12.5Z" fill="#fbc02d"/>
  <circle cx="12.5" cy="12.5" r="5.5" fill="#fff"/><circle cx="12.5" cy="12.5" r="4.3" fill="#4a8af4"/>
  <circle cx="20" cy="20" r="6.5" fill="#5a3e2e"/><text x="16.6" y="23" font-family="Liberation Sans" font-size="8" fill="#fff" font-weight="bold">W</text>
</svg>
<div class="a" style="left:512px;top:897px;width:43px;height:3px;background:#6fa8dc"></div>
<div class="a" style="left:560px;top:858px;width:51px;height:42px;background:#3a3a3a"></div>
<svg class="a" style="left:574px;top:866px" width="20" height="26" viewBox="0 0 20 26">
  <rect x="11" y="0" width="9" height="26" rx="1" fill="#e8b320"/><rect x="5.5" y="7" width="9" height="19" rx="1" fill="#f2c94c"/><rect x="0" y="14" width="9" height="12" rx="1" fill="#f9e08b"/>
</svg>
<div class="a" style="left:560px;top:897px;width:51px;height:3px;background:#6fa8dc"></div>
<!-- tray -->
<svg class="a" style="left:968px;top:867px" width="26" height="26" viewBox="0 0 26 26">
  <circle cx="11.5" cy="11.5" r="10.5" fill="#3aa0e8"/><circle cx="11.5" cy="11.5" r="8.5" fill="none" stroke="#fff" stroke-width="1.2"/>
  <text x="7" y="16.5" font-family="Liberation Sans" font-size="13" font-weight="bold" fill="#fff">?</text>
  <circle cx="19.5" cy="19.5" r="5" fill="#f2b01e"/><rect x="19" y="17.5" width="1.2" height="5" fill="#fff"/>
</svg>
<svg class="a" style="left:1031px;top:866px" width="27" height="27" viewBox="0 0 27 27">
  <circle cx="14" cy="14" r="10" fill="#f6a623"/>
  <path d="M2 9 C2 6 5 4.5 7.5 5.5 C9 3 13 3.5 13.5 6.5 C16 6.5 16.5 10 14 10.5 H3 C2.4 10.4 2 9.8 2 9Z" fill="#cfe1f3"/>
  <path d="M12 22 C12 19.5 14.5 18.5 16.5 19.3 C18 17 22 17.5 22.5 20.5 C25 20.5 25.5 24 23 24.5 H13.5 C12.6 24.3 12 23.2 12 22Z" fill="#cfe1f3"/>
</svg>
<div class="a t" style="left:1066px;top:872.5px;font-size:14.5px;color:#fff">29°C&nbsp; Parc. soleado</div>
<svg class="a" style="left:1215px;top:870px" width="20" height="18" viewBox="0 0 20 18">
  <path d="M2 12 C0 12 0 8 3 8 C3 4 8 3 10 6 C13 5 15 7 14.5 9 H3Z" fill="#c8d3de"/><circle cx="14" cy="13" r="4.5" fill="#1f7bdc"/><rect x="13.4" y="11.5" width="1.2" height="4" fill="#fff"/>
</svg>
<svg class="a" style="left:1242px;top:870px" width="18" height="18" viewBox="0 0 18 18">
  <path d="M3 4 L9 9 L15 4 M2 10 H16 M4 16 L9 10 L14 16" stroke="#2f4fd0" stroke-width="2"/><circle cx="11" cy="12" r="4" fill="#e02020"/>
</svg>
<svg class="a" style="left:1269px;top:871px" width="16" height="16" viewBox="0 0 16 16" fill="none" stroke="#ddd" stroke-width="1.1">
  <rect x="1" y="3" width="10" height="10" rx="1.5"/><path d="M11 6.5 L15 4.5 V11.5 L11 9.5"/><path d="M3 0.8 H8"/>
</svg>
<svg class="a" style="left:1290px;top:869px" width="19" height="19" viewBox="0 0 19 19">
  <rect x="0" y="0" width="19" height="19" rx="3" fill="#111"/><circle cx="9.5" cy="9.5" r="6" fill="none" stroke="#c77dff" stroke-width="2"/><circle cx="9.5" cy="9.5" r="3.5" fill="none" stroke="#ffd24a" stroke-width="1.5"/>
</svg>
<svg class="a" style="left:1314px;top:869px" width="19" height="19" viewBox="0 0 19 19">
  <circle cx="9.5" cy="9.5" r="9" fill="#0a0a0a"/><text x="4" y="13.5" font-family="Liberation Sans" font-size="10" fill="#ddd">bő</text>
</svg>
<svg class="a" style="left:1341px;top:869px" width="19" height="20" viewBox="0 0 19 20">
  <path d="M8.5 1 L16 3.5 V9 C16 13.5 12.5 16.5 8.5 18 C4.5 16.5 1 13.5 1 9 V3.5Z" fill="#fff"/><path d="M8.5 1 V18 C4.5 16.5 1 13.5 1 9 V3.5Z" fill="#333"/>
  <circle cx="14" cy="15" r="4.5" fill="#2ea043"/><path d="M11.8 15 L13.5 16.6 L16.3 13.6" stroke="#fff" stroke-width="1.2" fill="none"/>
</svg>
<svg class="a" style="left:1367px;top:872px" width="18" height="14" viewBox="0 0 18 14" fill="none" stroke="#ddd" stroke-width="1.1">
  <rect x="1" y="3" width="14.5" height="9"/><path d="M16.5 6 V9"/><rect x="2.8" y="4.8" width="5" height="5.4" fill="#ddd"/><path d="M3 0.5 L5 2.5" />
</svg>
<svg class="a" style="left:1392px;top:870px" width="19" height="17" viewBox="0 0 19 17" fill="none" stroke="#ddd" stroke-width="1.1">
  <path d="M1 6 H4 L8.5 2 V15 L4 11 H1Z"/><path d="M11 6 C12 7.5 12 9.5 11 11 M13.5 4 C15.5 7 15.5 10 13.5 13 M16 2 C19 6 19 11 16 15"/>
</svg>
<svg class="a" style="left:1418px;top:870px" width="18" height="17" viewBox="0 0 18 17" fill="none" stroke="#ddd" stroke-width="1.1">
  <path d="M1.5 15 C2 8 8 2.5 16.5 2 M5 15.5 C5.5 10.5 10 6 16.5 5.5 M8.5 15.5 C9 12.5 12 9.5 16 9.2"/><circle cx="15" cy="14.5" r="1.3" fill="#ddd"/>
</svg>
<div class="a t" style="left:1446px;top:873.5px;font-size:12.5px;color:#fff">ESP</div>
<div class="a t" style="left:1493px;top:864px;font-size:12.5px;color:#fff">05:29</div>
<div class="a t" style="left:1481px;top:882.5px;font-size:12.5px;color:#fff">11/1/2026</div>
<svg class="a" style="left:1556px;top:870px" width="20" height="19" viewBox="0 0 20 19" fill="none" stroke="#eee" stroke-width="1.2">
  <path d="M1.5 1.5 H18.5 V13 H11 L7 17 V13 H1.5Z"/><path d="M5 5.5 H15 M5 9 H12"/>
</svg>
<div class="a" style="left:1596px;top:858px;width:1px;height:42px;background:#666"></div>

<svg class="a" style="left:1573px;top:806.5px" width="21" height="21" viewBox="0 0 21 21" fill="none" stroke="#444" stroke-width="1.3">
  <path d="M8.8 1.5 H12.2 L12.8 4.3 L15 5.5 L17.7 4.6 L19.4 7.5 L17.3 9.4 V11.6 L19.4 13.5 L17.7 16.4 L15 15.5 L12.8 16.7 L12.2 19.5 H8.8 L8.2 16.7 L6 15.5 L3.3 16.4 L1.6 13.5 L3.7 11.6 V9.4 L1.6 7.5 L3.3 4.6 L6 5.5 L8.2 4.3 Z"/><circle cx="10.5" cy="10.5" r="3"/>
</svg>
<div class="a" style="left:0;top:167px;width:1600px;height:5px;background:linear-gradient(to bottom,rgba(0,0,0,.10),rgba(0,0,0,0))"></div></body></html>
